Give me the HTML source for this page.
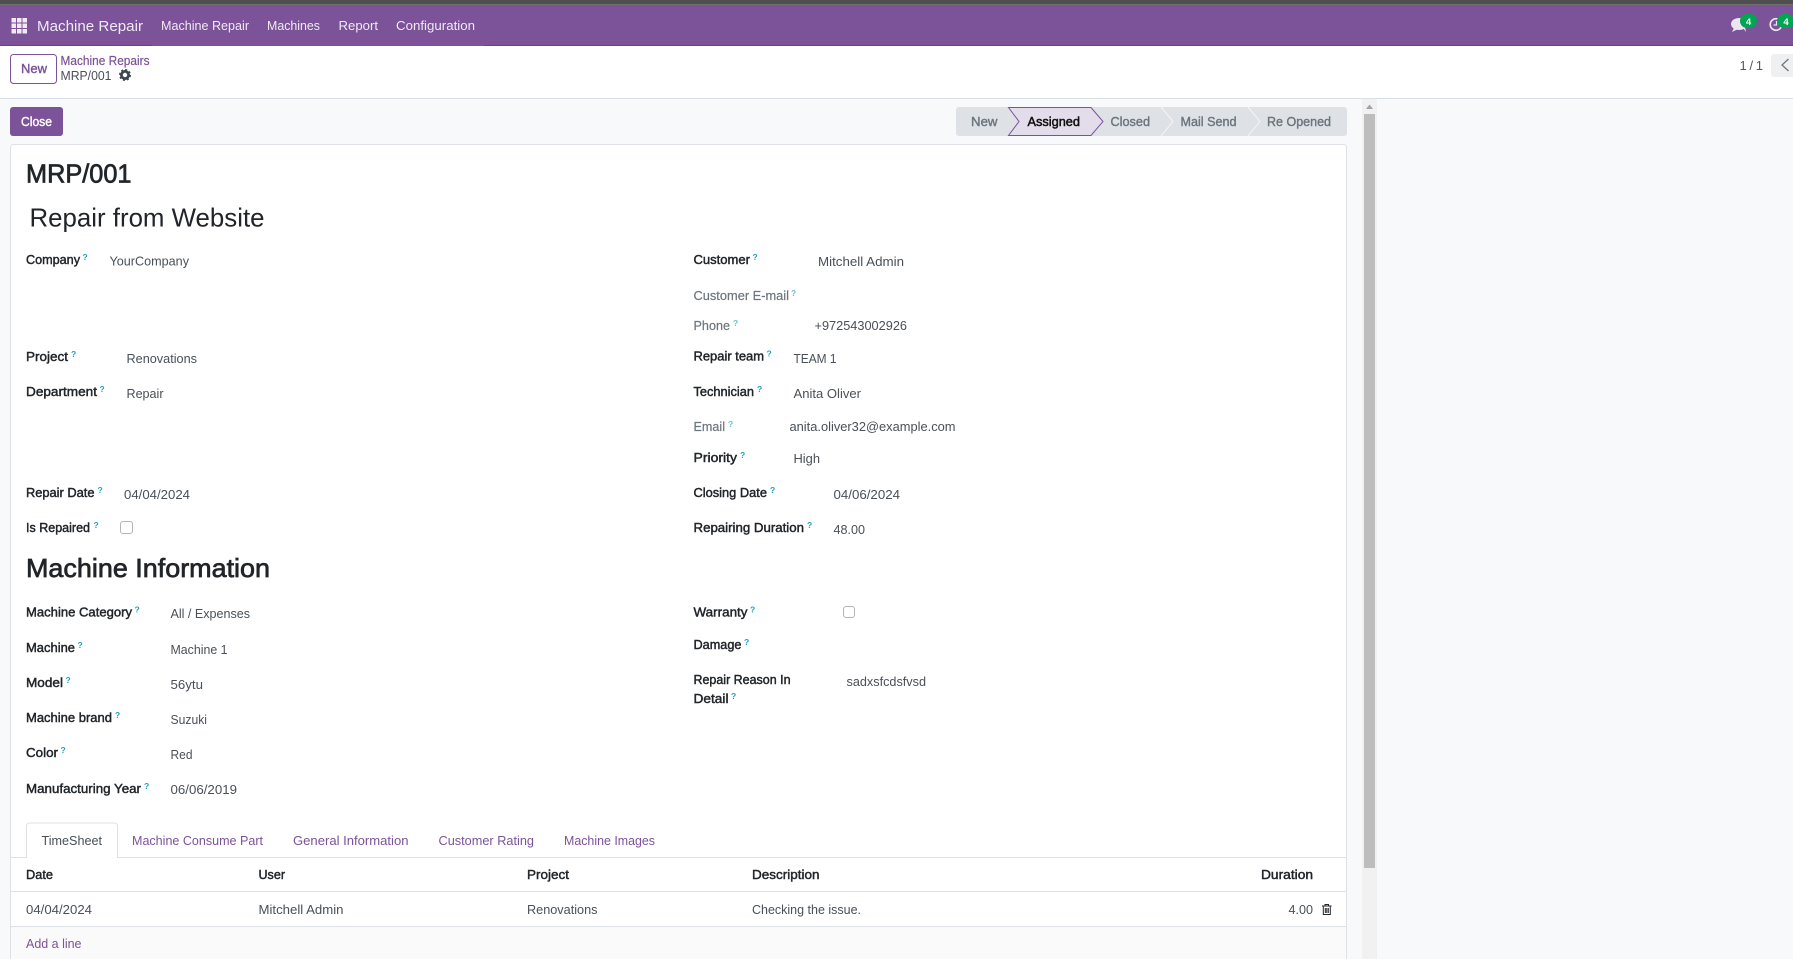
<!DOCTYPE html>
<html lang="en"><head><meta charset="utf-8"><title>MRP/001</title>
<style>
html,body{margin:0;padding:0;width:1793px;height:959px;overflow:hidden;background:#f8f9fa}
svg{display:block;position:absolute;left:0;top:0}
text{font-family:"Liberation Sans",sans-serif;font-size:13px;fill:#495057;white-space:pre}
.l{fill:#212529;stroke:#212529;stroke-width:.45px}
.g{fill:#6c757d;stroke:#6c757d;stroke-width:.2px}
.q{font-size:8.5px;font-weight:bold;fill:#1f9fc6;transform:translateX(-1px)}
.p{fill:#7c5299}
.w{fill:#f1e9f5;stroke:none}
.s{fill:#6c757d;stroke:#6c757d;stroke-width:.4px}
</style></head><body>
<svg width="1793" height="959" viewBox="0 0 1793 959" xmlns="http://www.w3.org/2000/svg">
<rect width="1793" height="959" fill="#f8f9fa"/>
<!-- top strip / navbar -->
<rect width="1793" height="4" fill="#4f4f4f"/><rect y="4" width="1793" height="1" fill="#6f6f6f"/>
<rect y="5" width="1793" height="40" fill="#7c5299"/>
<rect y="45" width="152" height="1" fill="#68437f"/><rect x="484" y="45" width="1309" height="1" fill="#68437f"/><rect x="152" y="45" width="332" height="1" fill="#7c5299"/>
<g fill="#f0eaf3">
<rect x="11.5" y="18" width="4.5" height="4.5"/><rect x="17" y="18" width="4.5" height="4.5"/><rect x="22.5" y="18" width="4.5" height="4.5"/>
<rect x="11.5" y="23.5" width="4.5" height="4.5"/><rect x="17" y="23.5" width="4.5" height="4.5"/><rect x="22.5" y="23.5" width="4.5" height="4.5"/>
<rect x="11.5" y="29" width="4.5" height="4.5"/><rect x="17" y="29" width="4.5" height="4.5"/><rect x="22.5" y="29" width="4.5" height="4.5"/>
</g>
<text class="w" x="37" y="31" style="font-size:14.5px" textLength="106" lengthAdjust="spacingAndGlyphs">Machine Repair</text>
<text class="w" x="161" y="30" textLength="88" lengthAdjust="spacingAndGlyphs">Machine Repair</text>
<text class="w" x="267" y="30" textLength="53" lengthAdjust="spacingAndGlyphs">Machines</text>
<text class="w" x="338.500" y="30" textLength="39.500" lengthAdjust="spacingAndGlyphs">Report</text>
<text class="w" x="396" y="30" textLength="79" lengthAdjust="spacingAndGlyphs">Configuration</text>
<!-- systray -->
<ellipse cx="1739" cy="24" rx="8" ry="6" fill="#ece6f0"/><path d="M1734 28l-2 4 6-3zM1743 28l3 4-1-5z" fill="#ece6f0"/>
<rect x="1740" y="14" width="17" height="14" rx="7" fill="#00a651"/>
<text x="1748.500" y="25" text-anchor="middle" style="font-size:9.5px;font-weight:bold;fill:#fff">4</text>
<circle cx="1776" cy="24.5" r="5.8" fill="none" stroke="#ece6f0" stroke-width="1.6"/><path d="M1776.500 21v4h-3" fill="none" stroke="#ece6f0" stroke-width="1.2"/>
<rect x="1777" y="14" width="17" height="14" rx="7" fill="#00a651"/>
<text x="1786" y="25" text-anchor="middle" style="font-size:9.5px;font-weight:bold;fill:#fff">4</text>
<!-- control panel -->
<rect y="46" width="1793" height="52" fill="#fff"/><rect y="98" width="1793" height="1" fill="#d8dfe6"/>
<rect x="10.5" y="54.5" width="46" height="29" rx="3" fill="#fff" stroke="#7c5299"/>
<text class="p" x="21" y="73" style="stroke:#7c5299;stroke-width:.4px" textLength="26" lengthAdjust="spacingAndGlyphs">New</text>
<text class="p" x="60.5" y="65" style="font-size:12.5px;stroke:#7c5299;stroke-width:.2px" textLength="89" lengthAdjust="spacingAndGlyphs">Machine Repairs</text>
<text x="60.5" y="80" textLength="51" lengthAdjust="spacingAndGlyphs">MRP/001</text>
<circle cx="125" cy="75" r="3.6" fill="none" stroke="#3e4750" stroke-width="2.8"/>
<circle cx="125" cy="75" r="5.2" fill="none" stroke="#3e4750" stroke-width="1.6" stroke-dasharray="2 2.08"/>
<text x="1739.5" y="70" style="fill:#54595f" textLength="23.5" lengthAdjust="spacing">1 / 1</text>
<rect x="1771" y="54" width="26" height="23" rx="3" fill="#eef0f2"/>
<path d="M1788.500 59l-6.500 6 6.500 6" fill="none" stroke="#777" stroke-width="1.3"/>
<!-- close -->
<rect x="10" y="107" width="53" height="29" rx="3" fill="#7c5299"/>
<text x="21" y="126" style="fill:#fff;stroke:#fff;stroke-width:.4px" textLength="31" lengthAdjust="spacingAndGlyphs">Close</text>
<!-- statusbar -->
<rect x="956" y="107" width="391" height="29" rx="3" fill="#dee2e6"/>
<path d="M1161 107l12 14.500-12 14.500M1248 107l12 14.500-12 14.500" fill="none" stroke="#f4f5f7" stroke-width="1"/>
<path d="M1008.500 107.500H1091l12 14-12 14h-82.500l10.500-14z" fill="#e3dcea" stroke="#7c5299"/>
<text class="s" x="971" y="126" textLength="26.500" lengthAdjust="spacingAndGlyphs">New</text>
<text x="1027.5" y="126" style="fill:#111;stroke:#111;stroke-width:.5px" textLength="52.500" lengthAdjust="spacingAndGlyphs">Assigned</text>
<text class="s" x="1110.5" y="126" textLength="39.500" lengthAdjust="spacingAndGlyphs">Closed</text>
<text class="s" x="1180.5" y="126" textLength="56" lengthAdjust="spacingAndGlyphs">Mail Send</text>
<text class="s" x="1267" y="126" textLength="64" lengthAdjust="spacingAndGlyphs">Re Opened</text>
<!-- scrollbar -->
<rect x="1362" y="99" width="15" height="860" fill="#f1f1f1"/>
<path d="M1369.500 104.500l3.500 4.500h-7z" fill="#a3a3a3"/>
<rect x="1364" y="114" width="11" height="754" fill="#bdbdbd"/>
<!-- card -->
<rect x="10.500" y="144.500" width="1336" height="830" rx="3" fill="#fff" stroke="#dee2e6"/>
<text x="26" y="182.500" style="font-size:26px;fill:#212529;stroke:#212529;stroke-width:.7px" textLength="105.500" lengthAdjust="spacingAndGlyphs">MRP/001</text>
<text x="29.500" y="226.500" style="font-size:26px;fill:#212529" textLength="235" lengthAdjust="spacingAndGlyphs">Repair from Website</text>
<!-- left group -->
<text class="l" x="26" y="264" textLength="54" lengthAdjust="spacingAndGlyphs">Company</text><text class="q" x="83.500" y="260">?</text>
<text x="109.500" y="265.500" textLength="79.500" lengthAdjust="spacingAndGlyphs">YourCompany</text>
<text class="l" x="26" y="361" textLength="42" lengthAdjust="spacingAndGlyphs">Project</text><text class="q" x="72" y="357">?</text>
<text x="126.500" y="363" textLength="70.500" lengthAdjust="spacingAndGlyphs">Renovations</text>
<text class="l" x="26" y="396" textLength="71" lengthAdjust="spacingAndGlyphs">Department</text><text class="q" x="100.500" y="392">?</text>
<text x="126.500" y="398" textLength="37" lengthAdjust="spacingAndGlyphs">Repair</text>
<text class="l" x="26" y="497" textLength="68.500" lengthAdjust="spacingAndGlyphs">Repair Date</text><text class="q" x="98.500" y="493">?</text>
<text x="124" y="499" textLength="66" lengthAdjust="spacingAndGlyphs">04/04/2024</text>
<text class="l" x="26" y="532" textLength="64" lengthAdjust="spacingAndGlyphs">Is Repaired</text><text class="q" x="94.500" y="528">?</text>
<rect x="120.500" y="521.500" width="12" height="12" rx="2.500" fill="#fff" stroke="#b5b5b5"/>
<!-- right group -->
<text class="l" x="693.500" y="264" textLength="56.500" lengthAdjust="spacingAndGlyphs">Customer</text><text class="q" x="753.500" y="260">?</text>
<text x="818" y="266" textLength="86" lengthAdjust="spacingAndGlyphs">Mitchell Admin</text>
<text class="g" x="693.500" y="300" textLength="95.500" lengthAdjust="spacingAndGlyphs">Customer E-mail</text><text class="q" x="792" y="296" style="fill:#6cbcd8">?</text>
<text class="g" x="693.500" y="330" textLength="36.500" lengthAdjust="spacingAndGlyphs">Phone</text><text class="q" x="734" y="326" style="fill:#6cbcd8">?</text>
<text x="814.500" y="330" textLength="92.500" lengthAdjust="spacingAndGlyphs">+972543002926</text>
<text class="l" x="693.500" y="360.500" textLength="70.500" lengthAdjust="spacingAndGlyphs">Repair team</text><text class="q" x="767.500" y="356.500">?</text>
<text x="793.500" y="363" textLength="43" lengthAdjust="spacingAndGlyphs">TEAM 1</text>
<text class="l" x="693.500" y="396" textLength="60.500" lengthAdjust="spacingAndGlyphs">Technician</text><text class="q" x="758" y="392">?</text>
<text x="793.500" y="398" textLength="67.500" lengthAdjust="spacingAndGlyphs">Anita Oliver</text>
<text class="g" x="693.500" y="431" textLength="31.500" lengthAdjust="spacingAndGlyphs">Email</text><text class="q" x="729" y="427" style="fill:#6cbcd8">?</text>
<text x="789.500" y="431" textLength="166" lengthAdjust="spacingAndGlyphs">anita.oliver32@example.com</text>
<text class="l" x="693.500" y="462" textLength="43.500" lengthAdjust="spacingAndGlyphs">Priority</text><text class="q" x="741" y="458">?</text>
<text x="793.500" y="463" textLength="26.500" lengthAdjust="spacingAndGlyphs">High</text>
<text class="l" x="693.500" y="497" textLength="73.500" lengthAdjust="spacingAndGlyphs">Closing Date</text><text class="q" x="771" y="493">?</text>
<text x="833.500" y="499" textLength="66.500" lengthAdjust="spacingAndGlyphs">04/06/2024</text>
<text class="l" x="693.500" y="532" textLength="110.500" lengthAdjust="spacingAndGlyphs">Repairing Duration</text><text class="q" x="808" y="528">?</text>
<text x="833.500" y="534" textLength="31.500" lengthAdjust="spacingAndGlyphs">48.00</text>
<!-- machine info -->
<text x="26" y="577" style="font-size:26px;fill:#212529;stroke:#212529;stroke-width:.7px" textLength="244" lengthAdjust="spacingAndGlyphs">Machine Information</text>
<text class="l" x="26" y="616.500" textLength="106" lengthAdjust="spacingAndGlyphs">Machine Category</text><text class="q" x="135.500" y="612.500">?</text>
<text x="170.500" y="618" textLength="79.500" lengthAdjust="spacingAndGlyphs">All / Expenses</text>
<text class="l" x="26" y="652" textLength="49" lengthAdjust="spacingAndGlyphs">Machine</text><text class="q" x="78.500" y="648">?</text>
<text x="170.500" y="654" textLength="57" lengthAdjust="spacingAndGlyphs">Machine 1</text>
<text class="l" x="26" y="687" textLength="37" lengthAdjust="spacingAndGlyphs">Model</text><text class="q" x="66.500" y="683">?</text>
<text x="170.500" y="689" textLength="32.500" lengthAdjust="spacingAndGlyphs">56ytu</text>
<text class="l" x="26" y="722" textLength="86" lengthAdjust="spacingAndGlyphs">Machine brand</text><text class="q" x="116" y="718">?</text>
<text x="170.500" y="724" textLength="36.500" lengthAdjust="spacingAndGlyphs">Suzuki</text>
<text class="l" x="26" y="757" textLength="32" lengthAdjust="spacingAndGlyphs">Color</text><text class="q" x="61.500" y="753">?</text>
<text x="170.500" y="759" textLength="22" lengthAdjust="spacingAndGlyphs">Red</text>
<text class="l" x="26" y="793" textLength="115" lengthAdjust="spacingAndGlyphs">Manufacturing Year</text><text class="q" x="145" y="789">?</text>
<text x="170.500" y="794" textLength="66.500" lengthAdjust="spacingAndGlyphs">06/06/2019</text>
<text class="l" x="693.500" y="616.500" textLength="54" lengthAdjust="spacingAndGlyphs">Warranty</text><text class="q" x="751" y="612.500">?</text>
<rect x="843.500" y="606.500" width="11" height="11" rx="2.500" fill="#fff" stroke="#b5b5b5"/>
<text class="l" x="693.500" y="649" textLength="48" lengthAdjust="spacingAndGlyphs">Damage</text><text class="q" x="745" y="645">?</text>
<text class="l" x="693.500" y="684" textLength="97" lengthAdjust="spacingAndGlyphs">Repair Reason In</text>
<text class="l" x="693.500" y="703" textLength="35" lengthAdjust="spacingAndGlyphs">Detail</text><text class="q" x="732" y="699">?</text>
<text x="846.500" y="686" textLength="79.500" lengthAdjust="spacingAndGlyphs">sadxsfcdsfvsd</text>
<!-- tabs -->
<path d="M11 857.500H26.500V826a3 3 0 0 1 3-3H114.500a3 3 0 0 1 3 3V857.500H1346" fill="none" stroke="#dee2e6"/>
<text x="41.500" y="845" textLength="60.500" lengthAdjust="spacingAndGlyphs">TimeSheet</text>
<text class="p" x="132" y="845" textLength="131" lengthAdjust="spacingAndGlyphs">Machine Consume Part</text>
<text class="p" x="293" y="845" textLength="115.500" lengthAdjust="spacingAndGlyphs">General Information</text>
<text class="p" x="438.500" y="845" textLength="95.500" lengthAdjust="spacingAndGlyphs">Customer Rating</text>
<text class="p" x="564" y="845" textLength="91" lengthAdjust="spacingAndGlyphs">Machine Images</text>
<!-- table -->
<text class="l" x="26" y="879" textLength="27" lengthAdjust="spacingAndGlyphs">Date</text>
<text class="l" x="258.500" y="879" textLength="26.500" lengthAdjust="spacingAndGlyphs">User</text>
<text class="l" x="527" y="879" textLength="42" lengthAdjust="spacingAndGlyphs">Project</text>
<text class="l" x="752" y="879" textLength="67.500" lengthAdjust="spacingAndGlyphs">Description</text>
<text class="l" x="1261" y="879" textLength="52" lengthAdjust="spacingAndGlyphs">Duration</text>
<rect x="11" y="891" width="1335" height="1" fill="#dee2e6"/>
<text x="26" y="914" textLength="66" lengthAdjust="spacingAndGlyphs">04/04/2024</text>
<text x="258.500" y="914" textLength="85" lengthAdjust="spacingAndGlyphs">Mitchell Admin</text>
<text x="527" y="914" textLength="70.500" lengthAdjust="spacingAndGlyphs">Renovations</text>
<text x="752" y="914" textLength="109" lengthAdjust="spacingAndGlyphs">Checking the issue.</text>
<text x="1288.500" y="914" textLength="24.500" lengthAdjust="spacingAndGlyphs">4.00</text>
<path d="M1322 906h9.500M1325 906v-1.500h3.500v1.500M1323.300 906v8.500h7v-8.500M1325.300 908v5M1326.800 908v5M1328.300 908v5" fill="none" stroke="#212529" stroke-width="1"/>
<rect x="11" y="926" width="1335" height="33" fill="#fafafa"/>
<rect x="11" y="926" width="1335" height="1" fill="#dee2e6"/>
<text class="p" x="26" y="948" textLength="55.500" lengthAdjust="spacingAndGlyphs">Add a line</text>
</svg>
</body></html>
